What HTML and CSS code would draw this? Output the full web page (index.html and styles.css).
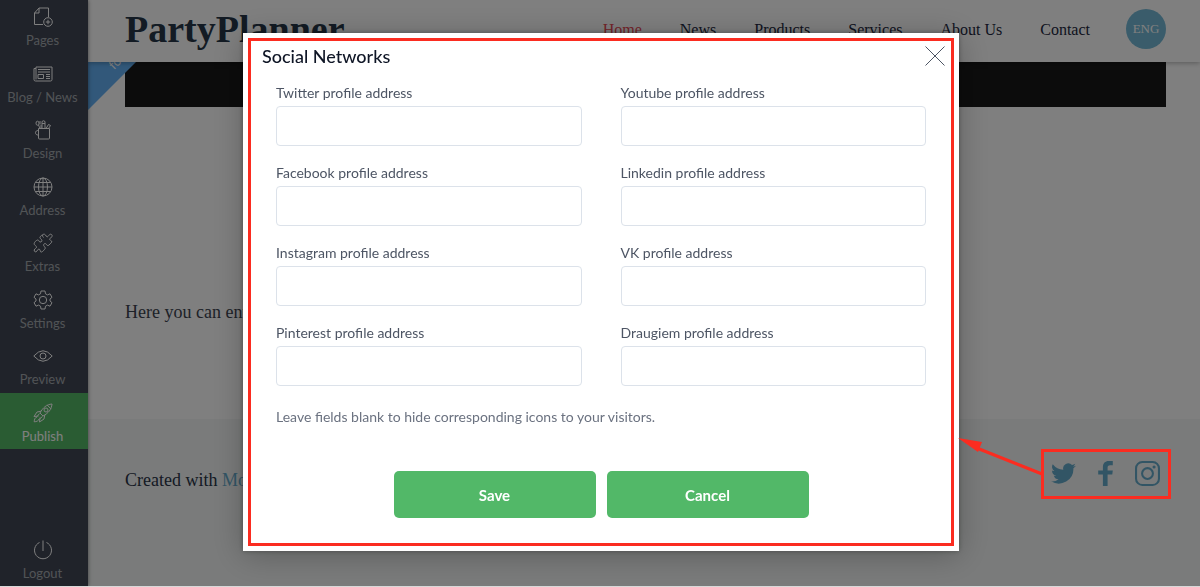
FILE: index.html
```
<!DOCTYPE html>
<html lang="en">

<head>
    <meta charset="UTF-8">
    <meta name="viewport" content="width=device-width, initial-scale=1.0">
    <title>PartyPlanner - Social Networks</title>
    <link rel="stylesheet" href="styles.css">
</head>

<body>
    <div class="app">
        <aside class="sidebar">
            <nav class="side-menu">
                <a class="side-item" href="#">
                    <svg class="side-icon" viewBox="0 0 20 20">
                        <path d="M10 17.5H1.5V6L6 1h9.500v9M6 1v5H1.500" />
                        <circle cx="15" cy="15" r="4.300" />
                        <path d="M15 12.800v4.400M12.800 15h4.400" />
                    </svg>
                    <span>Pages</span>
                </a>
                <a class="side-item" href="#">
                    <svg class="side-icon" viewBox="0 0 20 20">
                        <path d="M3 4.500V3h16v12.500q0 1.500-1.500 1.500h-15Q1 17 1 15.500V4.500h2v11" />
                        <path d="M5 5.500h12M5 8h12M13 10.500h4M13 12.500h4M13 14.500h4M5 10.500h5.500v4H5z" />
                    </svg>
                    <span>Blog / News</span>
                </a>
                <a class="side-item" href="#">
                    <svg class="side-icon" viewBox="0 0 20 20">
                        <path d="M5.500 8.500h11v9.500q0 1-1 1h-9q-1 0-1-1zM5.500 10.500C1.500 10 1.500 15.500 5.500 15" />
                        <path d="M7 8.500L5.500 5M9 8.500V1.500q1.500-1.500 3 0v7M9 3.500h3M13 8.500l2.500-4 2 1-2 3" />
                        <ellipse cx="4.500" cy="3.200" rx="1.500" ry="2" />
                        <path d="M7 1v3.500M8 8.500V5" />
                    </svg>
                    <span>Design</span>
                </a>
                <a class="side-item" href="#">
                    <svg class="side-icon" viewBox="0 0 20 20">
                        <circle cx="10" cy="10" r="9" />
                        <ellipse cx="10" cy="10" rx="4.500" ry="9" />
                        <path d="M10 1v18M1 10h18M2.500 5.500h15M2.500 14.500h15" />
                    </svg>
                    <span>Address</span>
                </a>
                <a class="side-item" href="#">
                    <svg class="side-icon" viewBox="0 0 20 20">
                        <path d="M10.500 4.500C8 2 11 0 12.500 2l1 1.500C15 5 16 1 17.500 1.200 20 1.500 19.500 4 17 5.500c-1.500 1 .5 1.500 1.500 2.500s-1 2.500-2.500 4c-1 1-2 .5-2.500-.5-1-2-4-.5-2.500 1.800.5.700 2 1 1 2.500-1 1.200-2 2.700-3.500 3.200-1.500.3-1-1.500-1.800-2.500-1-1.200-2 .2-2.700 1.500-1 1.500-3 1-2.800-1 .2-1.500 3-2 2.300-3.300C2.500 12.500 1 12 1.200 10.500 1.500 9 3 7.500 4.500 7c1.500-.3 1 1.500 2.500 2 1.500.3 2.500-1.200 1.500-2.500-.7-1-2-1-1.500-2.300.5-1.200 2-2.500 3-2.200" />
                    </svg>
                    <span>Extras</span>
                </a>
                <a class="side-item" href="#">
                    <svg class="side-icon" viewBox="0 0 20 20">
                        <path d="M8 1h4l.5 2.800 2 1.100L17 3.800 19 7.300 17 9v2l2 1.700-2 3.500-2.500-1.100-2 1.100L12 19H8l-.5-2.800-2-1.100L3 16.200 1 12.700 3 11V9L1 7.300 3 3.800l2.500 1.100 2-1.100z" />
                        <circle cx="10" cy="10" r="3.700" />
                    </svg>
                    <span>Settings</span>
                </a>
                <a class="side-item" href="#">
                    <svg class="side-icon" viewBox="0 0 20 20">
                        <path d="M.8 10Q10-.5 19.200 10 10 20.500.8 10z" />
                        <circle cx="10" cy="10" r="3" />
                    </svg>
                    <span>Preview</span>
                </a>
                <a class="side-item publish" href="#">
                    <svg class="side-icon" viewBox="0 0 20 20">
                        <path d="M7 10C10 4.500 13.500 1.500 19 1c-.5 5.500-3.500 9-9 12zM14 1.900l4.200 4.200M8 8.200L4 9l-3 4.500 4.500-.5M11.800 12l-.8 4-4.500 3 .5-4.500M6.500 10.500l-2.500 3M9.500 13.500l-3 2.500M4 14c-2 .5-2.700 2.500-2.800 4.800C3.500 18.700 5.500 18 6 16" />
                        <circle cx="13" cy="7" r="2" />
                    </svg>
                    <span>Publish</span>
                </a>
            </nav>
            <a class="side-item logout" href="#">
                <svg class="side-icon" viewBox="0 0 20 20">
                    <path d="M6.500 2.500a8.500 8.500 0 1 0 7 0M10 .5V11" />
                </svg>
                <span>Logout</span>
            </a>
        </aside>

        <div class="site">
            <header class="site-header">
                <a class="brand" href="#">PartyPlanner</a>
                <nav class="site-nav">
                    <a class="active" href="#">Home</a>
                    <a href="#">News</a>
                    <a href="#">Products</a>
                    <a href="#">Services</a>
                    <a href="#">About Us</a>
                    <a href="#">Contact</a>
                </nav>
                <a class="lang" href="#">ENG</a>
            </header>
            <main class="site-main">
                <div class="ribbon"><span>for</span></div>
                <div class="hero"></div>
                <p class="intro">Here you can enter</p>
            </main>
            <footer class="site-footer">
                <p>Created with <a href="#">Mozello</a></p>
                <div class="social">
                    <a href="#" aria-label="Twitter">
                        <svg viewBox="0 0 24 24">
                            <path d="M24 4.600a10 10 0 0 1-2.800.8 5 5 0 0 0 2.100-2.700 10 10 0 0 1-3.100 1.200 4.900 4.900 0 0 0-8.400 4.500A14 14 0 0 1 1.700 3.100a4.900 4.900 0 0 0 1.500 6.600 5 5 0 0 1-2.200-.6 4.900 4.900 0 0 0 3.900 4.900 5 5 0 0 1-2.200.1 4.900 4.900 0 0 0 4.600 3.400A10 10 0 0 1 0 19.500 14 14 0 0 0 21.500 7a10 10 0 0 0 2.500-2.400z" />
                        </svg>
                    </a>
                    <a href="#" aria-label="Facebook">
                        <svg viewBox="0 0 24 24">
                            <path d="M9.500 24V13H5V9h4.500V6c0-4 2.200-6 5.500-6h4v4h-2.500C14.500 4 14 5 14 6.500V9h5l-.5 4H14v11z" />
                        </svg>
                    </a>
                    <a href="#" aria-label="Instagram">
                        <svg class="outline" viewBox="0 0 24 24">
                            <rect x="1" y="1" width="22" height="22" rx="6" />
                            <circle cx="12" cy="12" r="5.200" />
                            <circle class="dot" cx="18.300" cy="5.700" r="1.500" />
                        </svg>
                    </a>
                </div>
            </footer>
        </div>
    </div>

    <div class="overlay">
        <div class="dialog" role="dialog" aria-labelledby="dialogTitle">
            <form class="dialog-frame">
                <div class="dialog-head">
                    <h2 id="dialogTitle">Social Networks</h2>
                    <button class="close-button" type="button" aria-label="Close">
                        <svg viewBox="0 0 20 20">
                            <path d="M.5.5l19 19M19.500.5l-19 19" />
                        </svg>
                    </button>
                </div>
                <div class="dialog-body">
                    <div class="fields">
                        <div class="field">
                            <label for="twitter">Twitter profile address</label>
                            <input type="text" id="twitter">
                        </div>
                        <div class="field">
                            <label for="youtube">Youtube profile address</label>
                            <input type="text" id="youtube">
                        </div>
                        <div class="field">
                            <label for="facebook">Facebook profile address</label>
                            <input type="text" id="facebook">
                        </div>
                        <div class="field">
                            <label for="linkedin">Linkedin profile address</label>
                            <input type="text" id="linkedin">
                        </div>
                        <div class="field">
                            <label for="instagram">Instagram profile address</label>
                            <input type="text" id="instagram">
                        </div>
                        <div class="field">
                            <label for="vk">VK profile address</label>
                            <input type="text" id="vk">
                        </div>
                        <div class="field">
                            <label for="pinterest">Pinterest profile address</label>
                            <input type="text" id="pinterest">
                        </div>
                        <div class="field">
                            <label for="draugiem">Draugiem profile address</label>
                            <input type="text" id="draugiem">
                        </div>
                    </div>
                    <p class="note">Leave fields blank to hide corresponding icons to your visitors.</p>
                    <div class="actions">
                        <button class="button" type="submit">Save</button>
                        <button class="button" type="button">Cancel</button>
                    </div>
                </div>
            </form>
        </div>
    </div>

    <!-- arrow and box pointing from the footer icons to the dialog -->
    <svg class="callout" viewBox="0 0 214 62" aria-hidden="true">
        <path class="arrow-line" d="M84 36L20 10.500" />
        <path class="arrow-head" d="M0 0l24 4-4 10z" />
        <rect x="84.500" y="12.500" width="127" height="47" />
    </svg>
</body>

</html>
```
FILE: styles.css
```
* {
    margin: 0;
    padding: 0;
    box-sizing: border-box;
}

body {
    position: relative;
    background: #d8d8d8;
    font-family: Lato, "Open Sans", sans-serif;
    overflow: hidden;
}

a {
    color: inherit;
    text-decoration: none;
}

.app {
    display: flex;
    min-height: calc(100vh - 1px);
    background: #fff;
}

/* Sidebar */
.sidebar {
    width: 88px;
    flex: none;
    display: flex;
    flex-direction: column;
    justify-content: space-between;
    background: #414755;
    box-shadow: 0 0 4px rgba(0, 0, 0, 0.5);
    z-index: 2;
}

.side-menu {
    display: grid;
    grid-auto-rows: 1fr;
    height: 452px;
    margin-top: -3px;
}

.side-item {
    display: flex;
    flex-direction: column;
    align-items: center;
    gap: 5px;
    padding: 10px 3px 0 0;
    color: #a3a8ad;
    font-size: 13px;
    line-height: 16px;
}

.side-icon {
    width: 20px;
    height: 20px;
    fill: none;
    stroke: #fff;
    stroke-width: 1;
    stroke-linejoin: round;
}

.publish {
    background: #55b967;
    color: #fff;
}

.logout {
    padding-bottom: 5px;
}

/* Site */
.site {
    flex: 1;
    display: flex;
    flex-direction: column;
    color: #3c4450;
    font-family: "Liberation Serif", serif;
    font-size: 18px;
}

.site-header {
    display: flex;
    align-items: center;
    height: 62px;
    padding: 0 34px 4px 37px;
    box-shadow: 0 1px 5px rgba(0, 0, 0, 0.3);
    z-index: 1;
}

.brand {
    color: #263648;
    font-size: 38px;
    font-weight: 700;
    line-height: 38px;
}

.site-nav {
    display: flex;
    gap: 38px;
    margin-left: auto;
    padding-top: 2px;
    color: #1c2740;
    font-size: 16px;
    line-height: 18px;
}

.site-nav .active {
    color: #e84855;
}

.lang {
    width: 40px;
    height: 40px;
    margin-left: 36px;
    border-radius: 50%;
    background: #74b9d6;
    color: #fff;
    font-size: 13px;
    line-height: 40px;
    text-align: center;
}

.site-main {
    position: relative;
    flex: 1;
    padding: 0 34px 0 37px;
}

.ribbon {
    position: absolute;
    top: 0;
    left: 0;
    width: 48px;
    height: 48px;
    background: #64b1f5;
    clip-path: polygon(0 0, 100% 0, 0 100%);
    color: #fff;
    font-family: Lato, sans-serif;
    font-size: 13px;
}

.ribbon span {
    position: absolute;
    top: -9px;
    left: 20px;
    transform: rotate(-45deg);
}

.hero {
    height: 45px;
    background: #191919;
}

.intro {
    margin-top: 195px;
    line-height: 20px;
}

.site-footer {
    display: flex;
    justify-content: space-between;
    align-items: flex-start;
    height: 167px;
    padding: 42px 40px 0 37px;
    background: #f4f7f6;
    color: #2b3548;
}

.site-footer p {
    margin-top: 9px;
    line-height: 20px;
}

.site-footer p a {
    color: #64aacb;
}

.social {
    display: flex;
    gap: 17px;
}

.social svg {
    display: block;
    width: 25px;
    height: 25px;
    fill: #64aacb;
}

.social .outline {
    fill: none;
    stroke: #64aacb;
    stroke-width: 2;
}

.social .dot {
    fill: #64aacb;
    stroke: none;
}

/* Dialog */
.overlay {
    position: fixed;
    inset: 0 0 1px;
    z-index: 10;
    display: flex;
    justify-content: center;
    align-items: flex-start;
    padding: 33px 0 0 2px;
    background: rgba(0, 0, 0, 0.5);
    overflow: hidden;
}

.dialog {
    width: 100%;
    max-width: 716px;
    padding: 5px;
    background: #fff;
    box-shadow: 0 4px 30px rgba(0, 0, 0, 0.25), 0 0 5px rgba(0, 0, 0, 0.3);
}

.dialog-frame {
    border: 3px solid #fb2c20;
}

.dialog-head {
    display: flex;
    justify-content: space-between;
    align-items: center;
    padding: 5px 6px 0 11px;
}

.dialog-head h2 {
    color: #0f1626;
    font-size: 18px;
    font-weight: 500;
    line-height: 20px;
}

.close-button {
    width: 20px;
    height: 20px;
    border: none;
    background: none;
    cursor: pointer;
}

.close-button svg {
    display: block;
    stroke: #4d5564;
    stroke-width: 1;
}

.dialog-body {
    padding: 18px 25px 25px;
}

.fields {
    display: grid;
    grid-template-columns: 1fr 1fr;
    gap: 18px 39px;
}

.field {
    display: flex;
    flex-direction: column;
    gap: 4px;
}

.field label,
.note {
    color: #4d5564;
    font-size: 14px;
    line-height: 18px;
}

.field input {
    height: 40px;
    padding: 0 12px;
    border: 1px solid #dce2ea;
    border-radius: 4px;
    font: inherit;
}

.note {
    margin-top: 22px;
    color: #6b7280;
}

.actions {
    display: flex;
    justify-content: center;
    gap: 11px;
    margin-top: 45px;
}

.button {
    width: 202px;
    height: 47px;
    border: none;
    border-radius: 5px;
    background: #52b868;
    color: #fff;
    font-family: inherit;
    font-size: 15px;
    font-weight: 700;
    cursor: pointer;
}

.callout {
    position: absolute;
    right: 28px;
    bottom: 86px;
    z-index: 11;
    width: 214px;
    height: 62px;
    fill: none;
    stroke: #fb2c20;
    stroke-width: 3;
}

.callout .arrow-head {
    fill: #fb2c20;
    stroke: none;
}
```
